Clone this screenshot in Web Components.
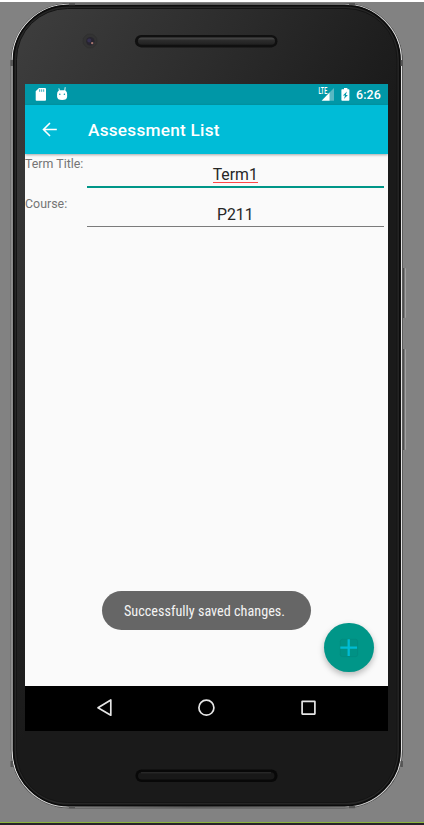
<!DOCTYPE html>
<html lang="en"><head><meta charset="utf-8"><title>Assessment List</title>
<style>html,body{margin:0;width:424px;height:825px;overflow:hidden}body{font-family:Roboto,"Noto Sans",sans-serif}</style></head>
<body>
<phone-stage>
 <phone-frame>
  <status-bar time="6:26"></status-bar>
  <app-bar>Assessment List</app-bar>
  <app-content>
   <form-row label="Term Title:" focused>Term1</form-row>
   <form-row label="Course:">P211</form-row>
   <toast-message slot="overlay">Successfully saved changes.</toast-message>
   <add-button slot="overlay"></add-button>
  </app-content>
  <nav-bar></nav-bar>
 </phone-frame>
</phone-stage>
<script>
const define=(name,html,setup)=>customElements.define(name,class extends HTMLElement{
  connectedCallback(){
    if(this.shadowRoot)return;
    const t=document.createElement('template');t.innerHTML=html;
    const r=this.attachShadow({mode:'open'});r.append(t.content.cloneNode(true));
    if(setup)setup(this,r);
  }
});
define('phone-stage',`<style>
:host{display:block;box-sizing:border-box;width:424px;height:825px;padding:3px 0 0 11px;position:relative;
background:linear-gradient(#fff 2px,#828282 2px,#828282 821.6px,#8bb53c 822px,#8bb53c 823px,#29222b 823px)}
.key{position:absolute;left:403px;width:3px;box-sizing:border-box;background:linear-gradient(90deg,#505050 0 1.4px,#a2a2a2 1.6px);border-radius:0 1px 1px 0}
</style><slot></slot><i class="key" style="top:268px;height:50px"></i><i class="key" style="top:349px;height:101px"></i>`);
define('phone-frame',`<style>
:host{display:block;position:relative;width:392px;height:806px}
.shell{position:absolute;left:0;top:0;overflow:visible}
.cols{position:relative;display:flex;flex-direction:column;height:806px;padding-left:14px;box-sizing:border-box}
.top{height:81px;flex:none}.screen{width:363px;height:646.5px;display:flex;flex-direction:column;overflow:hidden;background:#000}
</style>
<svg class="shell" width="392" height="806" viewBox="0 0 392 806">
<defs><linearGradient id="b" gradientUnits="userSpaceOnUse" x1="20" y1="10" x2="330" y2="190"><stop offset="0" stop-color="#3d3d3d"/><stop offset=".5" stop-color="#2c2c2c"/><stop offset="1" stop-color="#1a1a1a"/></linearGradient>
<linearGradient id="e" x1="0" y1="0" x2="1" y2="0"><stop offset="0" stop-color="#e4e4e4"/><stop offset=".2" stop-color="#bcbcbc"/><stop offset=".45" stop-color="#8c8c8c"/><stop offset=".8" stop-color="#b0b0b0"/><stop offset="1" stop-color="#e0e0e0"/></linearGradient>
<linearGradient id="s" x1="0" y1="0" x2="0" y2="1"><stop offset="0" stop-color="#4c4c4c"/><stop offset=".4" stop-color="#2c2c2c"/><stop offset="1" stop-color="#202020"/></linearGradient></defs>
<rect x=".2" y=".5" width="391.3" height="804.5" rx="58" fill="#101010" stroke="#555"/>
<rect x="1.1" y="1.2" width="389.4" height="802.8" rx="57" fill="#101010" stroke="url(#e)" stroke-width="1.1"/>
<rect x="2.7" y="2.6" width="386" height="799.8" rx="55" fill="#262626" stroke="#0c0c0c" stroke-width="1.6"/>
<rect x="5.5" y="5.5" width="380.5" height="794" rx="51" fill="url(#b)" stroke="#141414"/>
<g fill="#555"><path d="M58 0h6v2.3h-6zM338 0h6v2.3h-6zM58 803h6v2.3h-6zM338 803h6v2.3h-6zM-.5 57h2.4v6H-.5zM389.5 57h2.4v6H389.5zM-.5 758h2.4v6H-.5zM389.5 758h2.4v6H389.5z"/></g>
<circle cx="79" cy="38" r="7" fill="#333" stroke="#303030"/><circle cx="79.3" cy="38.3" r="4.2" fill="#28252f"/><circle cx="78.3" cy="37.6" r="2" fill="#353050"/><circle cx="81.2" cy="40.1" r="1.2" fill="#a97870"/>
<rect x="124" y="32" width="142.5" height="12.4" rx="6.2" fill="#101010"/><rect x="127" y="34.6" width="137" height="7.2" rx="3.6" fill="url(#s)"/>
<rect x="124.5" y="766.6" width="142" height="12.4" rx="6" fill="#080808"/><rect x="127" y="769.2" width="136.5" height="7.2" rx="3.6" fill="#181818"/><path d="M130 769.8h130" stroke="#303030"/>
</svg>
<div class="cols"><div class="top"></div><div class="screen"><slot></slot></div></div>`);
define('status-bar',`<style>
:host{display:flex;flex:none;height:21px;background:#0097a7;color:#fff}svg{display:block;flex:none}
span{font-size:12.4px;font-weight:500;line-height:21.5px;letter-spacing:.1px;margin-left:5px;width:32px}
.grow{flex:1}
</style>
<svg width="48" height="21" viewBox="0 0 48 21"><path fill="#fff" d="M14 4h6q1 0 1 1v11q0 .8-1 .8h-8.5q-.8 0-.8-.8V7.3z"/><path stroke="#0097a7" d="M14.7 5.3v2.5M16.7 5.3v2.5M18.7 5.3v2.5" stroke-width=".8"/>
<path fill="#fff" d="M32.1 10.2q0-3.7 3.2-4h3.7q3.1.3 3.1 4v2.2q0 3.5-5 3.5t-5-3.5z"/><path stroke="#fff" stroke-width=".9" d="M34.6 7.4 33.9 4.4M39.7 7.2l.5-4"/><circle cx="34.8" cy="10.2" r=".75" fill="#0097a7"/><circle cx="39.4" cy="10.2" r=".75" fill="#0097a7"/></svg>
<div class="grow"></div>
<svg width="36" height="21" viewBox="0 0 36 21"><path fill="#58b8c3" d="M19 4v12.7h-5V9z"/><path fill="#fff" d="M14.5 8.5v8.2H6.6z"/><text x="3.6" y="9.9" font-family="Roboto,sans-serif" font-size="8.4" font-weight="600" fill="#fff" textLength="8.6" lengthAdjust="spacingAndGlyphs">LTE</text>
<path fill="#fff" d="M29 4h3.4v1.2h1.3q.7 0 .7.8v10.1q0 .7-.7.7h-6.6q-.7 0-.7-.7V6q0-.8.7-.8H29z"/><path fill="#0097a7" d="m31.9 7.6-4 3.8h2.2l-1.2 3.6 4-4h-2.1z"/></svg><span></span>`,(h,r)=>r.querySelector('span').textContent=h.getAttribute('time'));
define('app-bar',`<style>
:host{display:flex;flex:none;align-items:center;height:49px;background:#00bcd7;color:#fff;position:relative;z-index:2;box-shadow:0 1px 2.5px #0005}
svg{flex:none}.t{font-size:17.2px;font-weight:500;line-height:20px;padding-top:1px;white-space:nowrap;letter-spacing:.25px}
</style><svg width="63" height="49" viewBox="0 0 63 49"><path fill="none" stroke="#fff" stroke-width="1.6" d="M31.8 24.5H18.8M25 18l-6.5 6.5L25 31"/></svg><div class="t"><slot></slot></div>`);
define('app-content',`<style>
:host{display:block;flex:none;height:532px;background:#fafafa;position:relative}
</style><slot></slot><slot name="overlay"></slot>`);
define('form-row',`<style>
:host{display:flex;height:39.6px;color:#262626}
.l{width:61.5px;flex:none;font-size:12.4px;line-height:15px;padding-top:2px;color:#757575;white-space:nowrap}
.f{width:297.5px;height:33px;box-sizing:border-box;border-bottom:1px solid #7b7b7b;text-align:center;font-size:15.8px;line-height:19px;padding-top:11.3px}
:host([focused]) .f{height:34px;border-bottom:2px solid #009688;padding-top:10.6px}
:host([focused]) .v{display:inline-block;height:19px;background:linear-gradient(#ff4949,#ff4949) 0 100%/100% 1.4px no-repeat}
</style><div class="l"></div><div class="f"><span class="v"><slot></slot></span></div>`,(h,r)=>r.querySelector('.l').textContent=h.getAttribute('label'));
define('toast-message',`<style>
:host{position:absolute;left:77px;top:437px;width:208.6px;height:39px;border-radius:20px;background:#666;color:#f4f4f4;display:flex;align-items:center}
span{margin-left:22px;padding-top:1px;font-size:14px;line-height:18px;white-space:nowrap;font-family:"Roboto Condensed",Roboto,sans-serif;transform-origin:0 50%;display:inline-block}
</style><span><slot></slot></span>`,(h,r)=>{const s=r.querySelector('span');s.style.transform='scaleX('+161/(s.getBoundingClientRect().width)+')'});
define('add-button',`<style>
:host{position:absolute;left:299.2px;top:469px;width:49.4px;height:49.4px;border-radius:50%;background:#009688;box-shadow:0 3px 6px #0004}
svg{display:block}</style><svg width="49.4" height="49.4" viewBox="0 0 50 50"><rect x="16.5" y="16.5" width="17.5" height="17.5" rx="2" fill="#009285" stroke="#008a7e" stroke-width=".7"/><path d="M25 16.5v17M16.5 25h17" stroke="#00bcd4" stroke-width="2.3"/></svg>`);
define('nav-bar',`<style>:host{display:block;height:44.5px;background:#000}svg{display:block}</style>
<svg width="363" height="44" viewBox="0 0 363 44" fill="none" stroke="#e6e6e6" stroke-width="1.7" stroke-linejoin="round"><path d="M73 21.7 85.8 14v15.2z"/><circle cx="181.4" cy="21.7" r="7.5"/><rect x="277.1" y="15.3" width="12.8" height="12.8" rx=".3"/></svg>`);
</script></body></html>
